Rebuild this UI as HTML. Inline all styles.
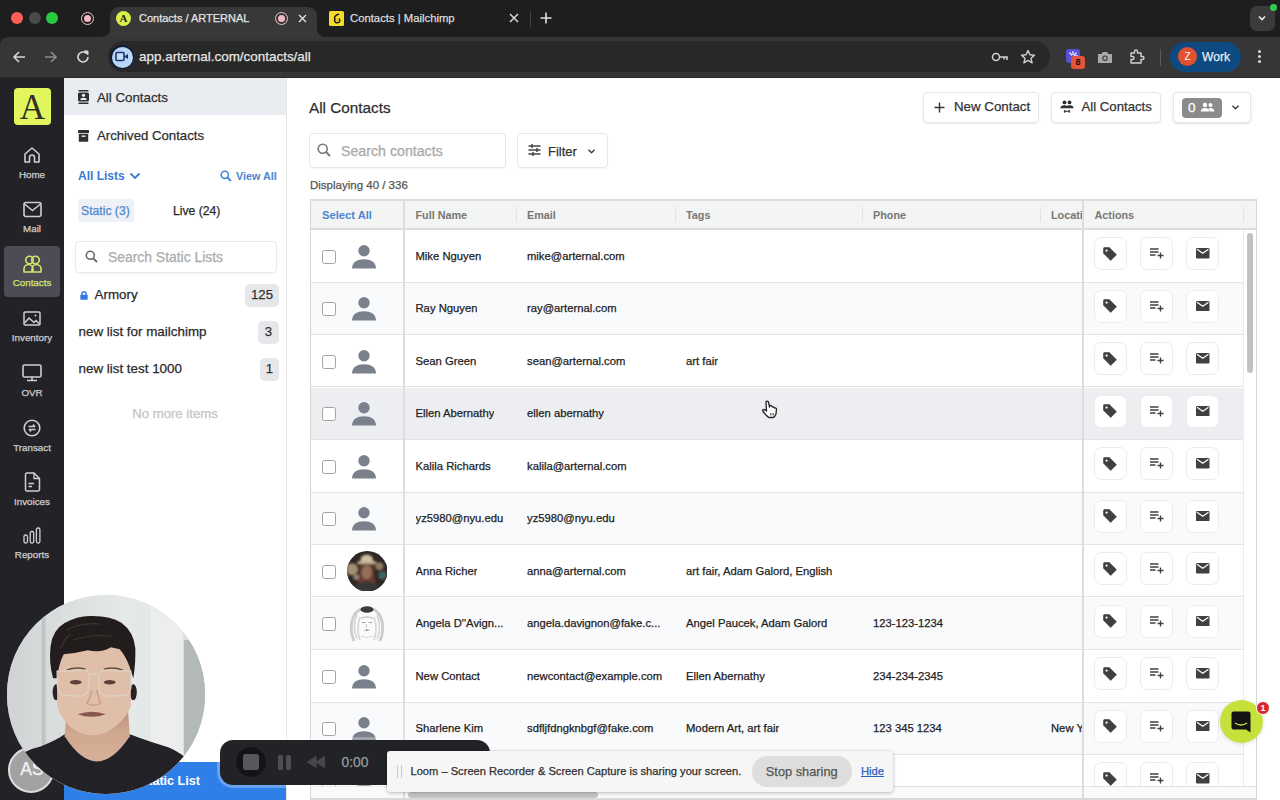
<!DOCTYPE html>
<html><head><meta charset="utf-8">
<style>
*{box-sizing:border-box;margin:0;padding:0}
html,body{width:1280px;height:800px;overflow:hidden;background:#fff}
body{position:relative;font-family:"Liberation Sans",sans-serif;color:#2b2b2b}
.a{position:absolute}
.nw{white-space:nowrap}
svg{display:block}
.nw{-webkit-text-stroke:0.25px currentColor}
.b{-webkit-text-stroke:0}
</style></head>
<body>
<!-- ===== CHROME TAB BAR ===== -->
<div class="a" style="left:0;top:0;width:1280px;height:45px;background:#1e1e1e"></div>
<div class="a" style="left:11px;top:12px;width:12px;height:12px;border-radius:50%;background:#fe5f57"></div>
<div class="a" style="left:29px;top:12px;width:12px;height:12px;border-radius:50%;background:#4a4a4a"></div>
<div class="a" style="left:46px;top:12px;width:12px;height:12px;border-radius:50%;background:#28c840"></div>
<div class="a" style="left:81px;top:12px;width:13px;height:13px;border-radius:50%;border:1.5px solid #f0c6ca;background:#1e1e1e"><div class="a" style="left:1.5px;top:1.5px;width:7px;height:7px;border-radius:50%;background:#f0b9c1"></div></div>
<!-- active tab -->
<div class="a" style="left:110px;top:7px;width:207px;height:31px;background:#383838;border-radius:9px 9px 0 0"></div>
<div class="a" style="left:102px;top:29px;width:8px;height:8px;background:radial-gradient(circle at 0 0,#1e1e1e 7.5px,#383838 8.5px)"></div>
<div class="a" style="left:317px;top:29px;width:8px;height:8px;background:radial-gradient(circle at 100% 0,#1e1e1e 7.5px,#383838 8.5px)"></div>
<div class="a" style="left:116px;top:11px;width:15px;height:15px;border-radius:50%;background:#d9f04a;color:#222;font:bold 11px 'Liberation Serif',serif;text-align:center;line-height:15px">A</div>
<div class="a nw" style="left:139px;top:11px;font-size:11px;color:#e3e3e3;line-height:15px">Contacts / ARTERNAL</div>
<div class="a" style="left:275px;top:12px;width:13px;height:13px;border-radius:50%;border:1.5px solid #f0c6ca;background:#363636"><div class="a" style="left:1.5px;top:1.5px;width:7px;height:7px;border-radius:50%;background:#f0b9c1"></div></div>
<svg class="a" style="left:297.5px;top:14px" width="9" height="9" viewBox="0 0 9 9"><path d="M1 1L8 8M8 1L1 8" stroke="#e0e0e0" stroke-width="1.4"/></svg>
<!-- second tab -->
<div class="a" style="left:329px;top:11.25px;width:14.5px;height:14.5px;border-radius:1.5px;background:#f3dd2c"></div><svg class="a" style="left:329px;top:11.25px" width="14.5" height="14.5" viewBox="0 0 14.5 14.5"><path d="M9.5 3.3Q7.5 3.5 6.2 5.2Q5 7 6 8.2Q4.8 9.8 6.5 11.3Q8.5 12.5 10.3 11Q11.3 9.5 10.3 8" stroke="#1a140c" stroke-width="1.4" fill="none" stroke-linecap="round"/><circle cx="8.2" cy="9" r="1.4" fill="#d8c030"/></svg>
<div class="a nw" style="left:350px;top:11px;font-size:11.3px;color:#dcdcdc;line-height:15px">Contacts | Mailchimp</div>
<svg class="a" style="left:509px;top:13px" width="10" height="10" viewBox="0 0 10 10"><path d="M1 1L9 9M9 1L1 9" stroke="#d8d8d8" stroke-width="1.5"/></svg>
<div class="a" style="left:530px;top:11px;width:1px;height:16px;background:#444"></div>
<svg class="a" style="left:540px;top:12px" width="12" height="12" viewBox="0 0 12 12"><path d="M6 0.5V11.5M0.5 6H11.5" stroke="#e0e0e0" stroke-width="1.6"/></svg>
<div class="a" style="left:1250px;top:6px;width:24.5px;height:25px;border-radius:7px;background:#3b3b3b"></div>
<svg class="a" style="left:1257px;top:14px" width="10" height="8" viewBox="0 0 10 8"><path d="M2 2.5L5 5.5L8 2.5" stroke="#e8e8e8" stroke-width="1.6" fill="none"/></svg>
<div class="a" style="left:1270px;top:4px;width:6.5px;height:6.5px;border-radius:50%;background:#35c94e"></div>

<!-- ===== TOOLBAR ===== -->
<div class="a" style="left:0;top:36.5px;width:1280px;height:41.5px;background:#363636;border-radius:8px 0 0 0;border-bottom:1px solid #2a2a2a"></div>
<svg class="a" style="left:11px;top:49px" width="16" height="16" viewBox="0 0 16 16"><path d="M14 8H3M8 3L3 8L8 13" stroke="#d6d6d6" stroke-width="1.6" fill="none"/></svg>
<svg class="a" style="left:43px;top:49px" width="16" height="16" viewBox="0 0 16 16"><path d="M2 8H13M8 3L13 8L8 13" stroke="#8a8a8a" stroke-width="1.6" fill="none"/></svg>
<svg class="a" style="left:75px;top:49px" width="16" height="16" viewBox="0 0 16 16"><path d="M13 8A5 5 0 1 1 11.5 4.4" stroke="#d6d6d6" stroke-width="1.6" fill="none"/><path d="M9 2H13V6Z" fill="#d6d6d6" stroke="#d6d6d6" stroke-width="1"/></svg>
<div class="a" style="left:108px;top:41px;width:942px;height:31px;border-radius:16px;background:#282828"></div>
<div class="a" style="left:110px;top:45px;width:24px;height:24px;border-radius:50%;background:#0f1c33"></div>
<div class="a" style="left:111.5px;top:46.5px;width:21px;height:21px;border-radius:50%;background:#b9d5f7"></div>
<svg class="a" style="left:115px;top:51px" width="14" height="12" viewBox="0 0 14 12"><rect x="1" y="1.5" width="8" height="8" rx="1" fill="#c7dcf7" stroke="#163a6e" stroke-width="1.6"/><path d="M9 5.5L13 3V8Z" fill="#163a6e"/></svg>
<div class="a nw" style="left:139px;top:48px;font-size:13.45px;color:#e6e6e6;line-height:17px">app.arternal.com/contacts/all</div>
<!-- key -->
<svg class="a" style="left:991px;top:50px" width="18" height="14" viewBox="0 0 18 14"><circle cx="5" cy="7" r="3.5" stroke="#cfcfcf" stroke-width="1.6" fill="none"/><path d="M8.5 7H16V10M13 7V9.5" stroke="#cfcfcf" stroke-width="1.6" fill="none"/></svg>
<svg class="a" style="left:1020px;top:49px" width="16" height="16" viewBox="0 0 16 16"><path d="M8 1.5L9.9 5.8L14.5 6.2L11 9.3L12.1 13.8L8 11.4L3.9 13.8L5 9.3L1.5 6.2L6.1 5.8Z" stroke="#d0d0d0" stroke-width="1.4" fill="none" stroke-linejoin="round"/></svg>
<!-- extension icons -->
<div class="a" style="left:1066px;top:49px;width:14px;height:14px;border-radius:3px;background:#5b4fd6"></div>
<svg class="a" style="left:1067px;top:50px" width="12" height="12" viewBox="0 0 12 12"><path d="M6 1V5M9.5 2.5L7 5.5M11 6H7M2.5 2.5L5 5.5" stroke="#e8e4ff" stroke-width="1.3"/></svg>
<div class="a" style="left:1071px;top:56px;width:14px;height:13px;border-radius:3px;background:#e5533a;color:#111;font:bold 9px 'Liberation Sans';text-align:center;line-height:13px">8</div>
<svg class="a" style="left:1097px;top:50px" width="16" height="14" viewBox="0 0 16 14"><path d="M1 4H4.5L6 2H10L11.5 4H15V13H1Z" fill="#a9a9a9"/><circle cx="8" cy="8.2" r="2.7" fill="#3a3a3a"/><circle cx="8" cy="8.2" r="1.6" fill="#a9a9a9"/></svg>
<svg class="a" style="left:1129px;top:49px" width="16" height="16" viewBox="0 0 16 16"><path d="M2 4H5.5V2.5A1.5 1.5 0 0 1 8.5 2.5V4H12V7.5H13.5A1.5 1.5 0 0 1 13.5 10.5H12V14H2V10.5H3.5A1.5 1.5 0 0 0 3.5 7.5H2Z" stroke="#d0d0d0" stroke-width="1.4" fill="none" stroke-linejoin="round"/></svg>
<div class="a" style="left:1160px;top:49px;width:1px;height:17px;background:#5a5a5a"></div>
<div class="a" style="left:1170px;top:42px;width:71px;height:30px;border-radius:15px;background:#0d4a82"></div>
<div class="a" style="left:1178px;top:47px;width:19px;height:19px;border-radius:50%;background:#e1502f;color:#fff;font-size:10px;text-align:center;line-height:19px">Z</div>
<div class="a nw" style="left:1202px;top:50px;font-size:12.1px;color:#e8eef5;line-height:15px">Work</div>
<div class="a" style="left:1258px;top:50px;width:3px;height:3px;border-radius:50%;background:#d8d8d8;box-shadow:0 5px 0 #d8d8d8,0 10px 0 #d8d8d8"></div>

<!-- ===== APP SIDEBAR ===== -->
<div class="a" style="left:0;top:78px;width:64px;height:722px;background:#232226"></div>

<div class="a" style="left:14px;top:88px;width:37px;height:37px;border-radius:4px;background:#e3f55c"></div>
<div class="a" style="left:14px;top:89px;width:37px;height:37px;text-align:center;font:35px/38px 'Liberation Serif',serif;color:#2f3026">A</div>
<svg class="a" style="left:23px;top:146px" width="18" height="18" viewBox="0 0 18 18"><path d="M2 8L9 2L16 8V16H11.5V11.5A2.5 2.5 0 0 0 6.5 11.5V16H2Z" stroke="#cfcfd1" stroke-width="1.6" fill="none" stroke-linejoin="round"/></svg>
<div class="a nw" style="left:0;top:169px;width:64px;text-align:center;font:9.8px/12px 'Liberation Sans';color:#cfcfd1">Home</div>
<svg class="a" style="left:23px;top:201px" width="19" height="17" viewBox="0 0 19 17"><rect x="1" y="1.5" width="17" height="14" rx="2" stroke="#cfcfd1" stroke-width="1.6" fill="none"/><path d="M1.5 3L9.5 9.5L17.5 3" stroke="#cfcfd1" stroke-width="1.6" fill="none"/></svg>
<div class="a nw" style="left:0;top:223px;width:64px;text-align:center;font:9.8px/12px 'Liberation Sans';color:#cfcfd1">Mail</div>
<div class="a" style="left:4px;top:246px;width:56px;height:51px;border-radius:4px;background:#4d4c55"></div>
<svg class="a" style="left:23px;top:255px" width="19" height="18" viewBox="0 0 19 18"><circle cx="6.5" cy="5" r="3.8" stroke="#d6e46e" stroke-width="1.6" fill="none"/><circle cx="12.5" cy="5" r="3.8" stroke="#d6e46e" stroke-width="1.6" fill="none"/><path d="M1 17V14A4.5 4.5 0 0 1 10 14V17ZM9 17V14A4.5 4.5 0 0 1 18 14V17Z" stroke="#d6e46e" stroke-width="1.6" fill="none" stroke-linejoin="round"/></svg>
<div class="a nw" style="left:0;top:277px;width:64px;text-align:center;font:9.8px/12px 'Liberation Sans';color:#d6e46e">Contacts</div>
<svg class="a" style="left:23px;top:311px" width="18" height="15" viewBox="0 0 18 15"><rect x="1" y="1" width="16" height="13" rx="1" stroke="#cfcfd1" stroke-width="1.5" fill="none"/><path d="M1.5 12L6 7L11 11.5L13 9.5L16.5 13" stroke="#cfcfd1" stroke-width="1.5" fill="none"/><circle cx="12.5" cy="4.5" r="1" fill="#cfcfd1"/></svg>
<div class="a nw" style="left:0;top:332px;width:64px;text-align:center;font:9.8px/12px 'Liberation Sans';color:#cfcfd1">Inventory</div>
<svg class="a" style="left:22px;top:364px" width="20" height="18" viewBox="0 0 20 18"><rect x="1" y="1" width="18" height="12" rx="1.5" stroke="#cfcfd1" stroke-width="1.6" fill="none"/><path d="M10 13V16M5 16.5H15" stroke="#cfcfd1" stroke-width="1.6"/></svg>
<div class="a nw" style="left:0;top:387px;width:64px;text-align:center;font:9.8px/12px 'Liberation Sans';color:#cfcfd1">OVR</div>
<svg class="a" style="left:23px;top:419px" width="18" height="18" viewBox="0 0 18 18"><circle cx="9" cy="9" r="7.8" stroke="#cfcfd1" stroke-width="1.6" fill="none"/><path d="M5.5 7.5H12M10 5.5L12 7.5M12.5 10.5H6M8 12.5L6 10.5" stroke="#cfcfd1" stroke-width="1.5" fill="none"/></svg>
<div class="a nw" style="left:0;top:442px;width:64px;text-align:center;font:9.8px/12px 'Liberation Sans';color:#cfcfd1">Transact</div>
<svg class="a" style="left:24px;top:472px" width="17" height="20" viewBox="0 0 17 20"><path d="M1.5 2.5A1.5 1.5 0 0 1 3 1H10L15.5 6.5V17.5A1.5 1.5 0 0 1 14 19H3A1.5 1.5 0 0 1 1.5 17.5Z" stroke="#cfcfd1" stroke-width="1.5" fill="none"/><path d="M10 1V6.5H15.5" stroke="#cfcfd1" stroke-width="1.3" fill="none"/><path d="M4.5 11.5H10M4.5 14.5H8" stroke="#cfcfd1" stroke-width="1.5"/></svg>
<div class="a nw" style="left:0;top:496px;width:64px;text-align:center;font:9.8px/12px 'Liberation Sans';color:#cfcfd1">Invoices</div>
<svg class="a" style="left:23px;top:527px" width="18" height="17" viewBox="0 0 18 17"><rect x="1" y="8" width="3.5" height="8" rx="1.5" stroke="#cfcfd1" stroke-width="1.3" fill="none"/><rect x="7.2" y="4.5" width="3.5" height="11.5" rx="1.5" stroke="#cfcfd1" stroke-width="1.3" fill="none"/><rect x="13.4" y="1" width="3.5" height="15" rx="1.5" stroke="#cfcfd1" stroke-width="1.3" fill="none"/></svg>
<div class="a nw" style="left:0;top:549px;width:64px;text-align:center;font:9.8px/12px 'Liberation Sans';color:#cfcfd1">Reports</div>


<!-- ===== PANEL ===== -->
<div class="a" style="left:64px;top:78px;width:223px;height:722px;background:#fff;border-right:1px solid #e6e6e6"></div>

<div class="a" style="left:64px;top:78px;width:222px;height:37px;background:#e9edf2"></div>
<svg class="a" style="left:78px;top:90px" width="11" height="14" viewBox="0 0 11 14"><rect x="0.5" y="0" width="10" height="1.5" rx="0.5" fill="#2f2f2f"/><rect x="0" y="2.5" width="11" height="9" rx="1.5" fill="#2f2f2f"/><rect x="0.5" y="12.5" width="10" height="1.5" rx="0.5" fill="#2f2f2f"/><circle cx="5.5" cy="5.3" r="1.6" fill="#e9edf2"/><path d="M2.3 10A3.2 2.2 0 0 1 8.7 10Z" fill="#e9edf2"/></svg>
<div class="a nw" style="left:97px;top:90px;font-size:13.3px;line-height:16px;color:#2e2e2e">All Contacts</div>
<svg class="a" style="left:78px;top:130px" width="11" height="12" viewBox="0 0 11 12"><rect x="0" y="0" width="11" height="3" rx="0.5" fill="#2f2f2f"/><rect x="0.8" y="3.8" width="9.4" height="8" rx="0.5" fill="#2f2f2f"/><rect x="3.5" y="5.5" width="4" height="1.3" fill="#fff"/></svg>
<div class="a nw" style="left:97px;top:128px;font-size:13.2px;line-height:16px;color:#2e2e2e">Archived Contacts</div>
<div class="a nw b" style="left:78px;top:169px;font:bold 12px/15px 'Liberation Sans';color:#3a7bd5">All Lists</div>
<svg class="a" style="left:129px;top:171px" width="12" height="10" viewBox="0 0 12 10"><path d="M1.5 2.5L6 7L10.5 2.5" stroke="#3a7bd5" stroke-width="1.8" fill="none"/></svg>
<svg class="a" style="left:220px;top:170px" width="12" height="12" viewBox="0 0 12 12"><circle cx="4.8" cy="4.8" r="3.6" stroke="#4a86d2" stroke-width="1.6" fill="none"/><path d="M7.5 7.5L11 11" stroke="#4a86d2" stroke-width="1.8"/></svg>
<div class="a nw b" style="left:236px;top:170px;font:bold 10.8px/13px 'Liberation Sans';color:#4a86d2">View All</div>
<div class="a" style="left:78px;top:199px;width:56px;height:23px;border-radius:3px;background:#eef1f5"></div>
<div class="a nw" style="left:81px;top:204px;font-size:12.2px;line-height:15px;color:#4f88cf">Static (3)</div>
<div class="a nw" style="left:173px;top:204px;font-size:12.2px;line-height:15px;color:#2a2a2a">Live (24)</div>
<div class="a" style="left:75px;top:241px;width:202px;height:31.5px;border-radius:4px;border:1px solid #e6e8ec;box-shadow:0 1px 2px rgba(0,0,0,0.05)"></div>
<svg class="a" style="left:85px;top:250px" width="13" height="13" viewBox="0 0 13 13"><circle cx="5.3" cy="5.3" r="4" stroke="#666" stroke-width="1.6" fill="none"/><path d="M8.3 8.3L12 12" stroke="#666" stroke-width="1.8"/></svg>
<div class="a nw" style="left:108px;top:249px;font-size:13.9px;line-height:17px;color:#ababab">Search Static Lists</div>
<svg class="a" style="left:80px;top:291px" width="8" height="9" viewBox="0 0 8 9"><path d="M1.9 4V2.8A2.1 2.1 0 0 1 6.1 2.8V4" stroke="#3478e0" stroke-width="1.4" fill="none"/><rect x="0.3" y="3.8" width="7.4" height="5" rx="0.8" fill="#3478e0"/></svg>
<div class="a nw" style="left:94.5px;top:287px;font-size:13.4px;line-height:16px;color:#2a2a2a">Armory</div>
<div class="a" style="left:245px;top:284px;width:34px;height:22.5px;border-radius:5px;background:#e6e7ea"></div>
<div class="a nw" style="left:245px;top:287px;width:34px;text-align:center;font-size:13.2px;line-height:16px;color:#333">125</div>
<div class="a nw" style="left:78.5px;top:324px;font-size:13.4px;line-height:16px;color:#2a2a2a">new list for mailchimp</div>
<div class="a" style="left:258px;top:321px;width:21px;height:22.5px;border-radius:5px;background:#e6e7ea"></div>
<div class="a nw" style="left:258px;top:324px;width:21px;text-align:center;font-size:13.2px;line-height:16px;color:#333">3</div>
<div class="a nw" style="left:78.5px;top:361px;font-size:13.4px;line-height:16px;color:#2a2a2a">new list test 1000</div>
<div class="a" style="left:260px;top:358px;width:19px;height:22.5px;border-radius:5px;background:#e6e7ea"></div>
<div class="a nw" style="left:260px;top:361px;width:19px;text-align:center;font-size:13.2px;line-height:16px;color:#333">1</div>
<div class="a nw" style="left:64px;top:406px;width:222px;text-align:center;font-size:13.2px;line-height:16px;color:#c4c4c4">No more items</div>
<div class="a" style="left:64px;top:761.5px;width:222px;height:39px;background:#2f7fe8"></div>
<div class="a nw b" style="left:0px;top:773px;width:200px;text-align:right;font:bold 12.6px/16px 'Liberation Sans';color:#fff">+&nbsp;&nbsp;Create Static List</div>


<!-- ===== MAIN ===== -->
<!-- MAIN START -->
<div class="a nw" style="left:309px;top:99px;font-size:15.3px;line-height:17px;color:#2e2e2e">All Contacts</div>
<div class="a" style="left:922.5px;top:92px;width:116.5px;height:31px;border-radius:4px;border:1px solid #e6e6e6;box-shadow:0 1px 2px rgba(0,0,0,0.08);background:#fff"></div>
<svg class="a" style="left:934px;top:102px" width="11" height="11" viewBox="0 0 11 11"><path d="M5.5 0.5V10.5M0.5 5.5H10.5" stroke="#333" stroke-width="1.4"/></svg>
<div class="a nw" style="left:954px;top:99px;font-size:13.3px;line-height:16px;color:#333">New Contact</div>
<div class="a" style="left:1050.5px;top:92px;width:110px;height:31px;border-radius:4px;border:1px solid #e6e6e6;box-shadow:0 1px 2px rgba(0,0,0,0.08);background:#fff"></div>
<svg class="a" style="left:1060px;top:100px" width="14" height="14" viewBox="0 0 14 14"><circle cx="4.5" cy="2.4" r="1.9" fill="#2e2e2e"/><circle cx="9.5" cy="2.4" r="1.9" fill="#2e2e2e"/><path d="M0.3 8.3Q0.8 5 4.5 5.2Q7 5.4 7 6.2Q7 5.4 9.5 5.2Q13.2 5 13.7 8.3Z" fill="#2e2e2e"/><path d="M4 11.3H10M4 11.3L5.3 10.1M4 11.3L5.3 12.5M10 11.3L8.7 10.1M10 11.3L8.7 12.5" stroke="#2e2e2e" stroke-width="1.1" fill="none"/></svg>
<div class="a nw" style="left:1081.5px;top:99px;font-size:13.2px;line-height:16px;color:#333">All Contacts</div>
<div class="a" style="left:1173px;top:92px;width:78px;height:31px;border-radius:4px;border:1px solid #e6e6e6;box-shadow:0 1px 3px rgba(0,0,0,0.12);background:#fff"></div>
<div class="a" style="left:1182px;top:98px;width:40px;height:19.5px;border-radius:4px;background:#8b8b8b"></div>
<div class="a nw" style="left:1188px;top:99px;font-size:13.5px;line-height:17px;color:#fff">0</div>
<svg class="a" style="left:1200px;top:102px" width="15" height="11" viewBox="0 0 15 11"><circle cx="5" cy="3" r="2.2" fill="#fff"/><circle cx="10.5" cy="3" r="2" fill="#fff"/><path d="M0.8 9.5A4.2 3.5 0 0 1 9.2 9.5Z" fill="#fff"/><path d="M8.5 6.5A3.8 3 0 0 1 14.3 9.5H10Z" fill="#fff"/></svg>
<svg class="a" style="left:1231px;top:104px" width="9" height="7" viewBox="0 0 9 7"><path d="M1.5 1.8L4.5 4.8L7.5 1.8" stroke="#444" stroke-width="1.5" fill="none"/></svg>

<div class="a" style="left:309px;top:133px;width:197px;height:35px;border-radius:4px;border:1px solid #e6e6e6;box-shadow:0 1px 1px rgba(0,0,0,0.03)"></div>
<svg class="a" style="left:317px;top:143px" width="14" height="14" viewBox="0 0 14 14"><circle cx="5.7" cy="5.7" r="4.5" stroke="#777" stroke-width="1.6" fill="none"/><path d="M9 9L13 13" stroke="#777" stroke-width="1.8"/></svg>
<div class="a nw" style="left:341px;top:143px;font-size:14.2px;line-height:17px;color:#a9a9a9">Search contacts</div>
<div class="a" style="left:517px;top:133px;width:91px;height:35px;border-radius:4px;border:1px solid #e6e6e6;box-shadow:0 1px 1px rgba(0,0,0,0.04)"></div>
<svg class="a" style="left:528px;top:144px" width="13" height="12" viewBox="0 0 13 12"><path d="M0.5 2H12.5M0.5 6H12.5M0.5 10H12.5" stroke="#444" stroke-width="1.3"/><path d="M4 0V4M9 4V8M5 8V12" stroke="#444" stroke-width="1.5"/></svg>
<div class="a nw" style="left:548px;top:144px;font-size:13px;line-height:16px;color:#333">Filter</div>
<svg class="a" style="left:587px;top:148px" width="9" height="7" viewBox="0 0 9 7"><path d="M1.5 1.8L4.5 4.8L7.5 1.8" stroke="#444" stroke-width="1.5" fill="none"/></svg>
<div class="a nw" style="left:310px;top:178px;font-size:11.5px;line-height:14px;color:#555">Displaying 40 / 336</div>

<div class="a" style="left:310px;top:199px;width:947px;height:601px;overflow:hidden;background:#fff">
<div class="a" style="left:0;top:0;width:947px;height:31px;background:#f3f4f4"></div>
<div class="a" style="left:0;top:0;width:947px;height:2px;background:#dddddd"></div>
<div class="a" style="left:0;top:29px;width:947px;height:2px;background:#dcdcdc"></div>
<div class="a nw b" style="left:12px;top:10px;font:bold 11.2px/13px 'Liberation Sans';color:#4d86d0">Select All</div>
<div class="a nw b" style="left:105.5px;top:10px;font:bold 10.8px/13px 'Liberation Sans';color:#777">Full Name</div>
<div class="a nw b" style="left:217px;top:10px;font:bold 10.8px/13px 'Liberation Sans';color:#777">Email</div>
<div class="a nw b" style="left:376px;top:10px;font:bold 10.8px/13px 'Liberation Sans';color:#777">Tags</div>
<div class="a nw b" style="left:563px;top:10px;font:bold 10.8px/13px 'Liberation Sans';color:#777">Phone</div>
<div class="a nw b" style="left:741px;top:10px;width:31px;overflow:hidden;font:bold 10.8px/13px 'Liberation Sans';color:#777">Location</div>
<div class="a nw b" style="left:784.5px;top:10px;font:bold 10.8px/13px 'Liberation Sans';color:#777">Actions</div>
<div class="a" style="left:206px;top:8px;width:1px;height:15px;background:#e3e3e3"></div>
<div class="a" style="left:365px;top:8px;width:1px;height:15px;background:#e3e3e3"></div>
<div class="a" style="left:552px;top:8px;width:1px;height:15px;background:#e3e3e3"></div>
<div class="a" style="left:730px;top:8px;width:1px;height:15px;background:#e3e3e3"></div>
<div class="a" style="left:933px;top:8px;width:1px;height:15px;background:#e3e3e3"></div>
<div class="a" style="left:0;top:31.0px;width:947px;height:52.5px;background:#fff"></div>
<div class="a" style="left:0;top:83px;width:947px;height:1px;background:#e3e3e3"></div>
<div class="a" style="left:12px;top:50.5px;width:14px;height:14px;border-radius:2.5px;border:1.3px solid #a3a3a3;background:#fff"></div>
<svg class="a" style="left:42px;top:45.650000000000006px" width="24" height="24" viewBox="0 0 24 24"><circle cx="12" cy="5.7" r="5.7" fill="#7b818c"/><path d="M0 23.6C0 17.2 5 14.2 12 14.2C19 14.2 24 17.2 24 23.6Z" fill="#7b818c"/></svg>
<div class="a nw" style="left:105.5px;top:49.75px;font-size:11.25px;line-height:14px;color:#222;max-width:666.5px;overflow:hidden">Mike Nguyen</div>
<div class="a nw" style="left:217px;top:49.75px;font-size:11.25px;line-height:14px;color:#222;max-width:555px;overflow:hidden">mike@arternal.com</div>
<div class="a" style="left:0;top:83.5px;width:947px;height:52.5px;background:#f9fafc"></div>
<div class="a" style="left:0;top:135px;width:947px;height:1px;background:#e3e3e3"></div>
<div class="a" style="left:12px;top:103.0px;width:14px;height:14px;border-radius:2.5px;border:1.3px solid #a3a3a3;background:#fff"></div>
<svg class="a" style="left:42px;top:98.14999999999998px" width="24" height="24" viewBox="0 0 24 24"><circle cx="12" cy="5.7" r="5.7" fill="#7b818c"/><path d="M0 23.6C0 17.2 5 14.2 12 14.2C19 14.2 24 17.2 24 23.6Z" fill="#7b818c"/></svg>
<div class="a nw" style="left:105.5px;top:102.25px;font-size:11.25px;line-height:14px;color:#222;max-width:666.5px;overflow:hidden">Ray Nguyen</div>
<div class="a nw" style="left:217px;top:102.25px;font-size:11.25px;line-height:14px;color:#222;max-width:555px;overflow:hidden">ray@arternal.com</div>
<div class="a" style="left:0;top:136.0px;width:947px;height:52.5px;background:#fff"></div>
<div class="a" style="left:0;top:187px;width:947px;height:1px;background:#e3e3e3"></div>
<div class="a" style="left:12px;top:155.5px;width:14px;height:14px;border-radius:2.5px;border:1.3px solid #a3a3a3;background:#fff"></div>
<svg class="a" style="left:42px;top:150.64999999999998px" width="24" height="24" viewBox="0 0 24 24"><circle cx="12" cy="5.7" r="5.7" fill="#7b818c"/><path d="M0 23.6C0 17.2 5 14.2 12 14.2C19 14.2 24 17.2 24 23.6Z" fill="#7b818c"/></svg>
<div class="a nw" style="left:105.5px;top:154.75px;font-size:11.25px;line-height:14px;color:#222;max-width:666.5px;overflow:hidden">Sean Green</div>
<div class="a nw" style="left:217px;top:154.75px;font-size:11.25px;line-height:14px;color:#222;max-width:555px;overflow:hidden">sean@arternal.com</div>
<div class="a nw" style="left:376px;top:154.75px;font-size:11.25px;line-height:14px;color:#222;max-width:396px;overflow:hidden">art fair</div>
<div class="a" style="left:0;top:188.5px;width:947px;height:52.5px;background:#eceef1"></div>
<div class="a" style="left:0;top:240px;width:947px;height:1px;background:#e3e3e3"></div>
<div class="a" style="left:12px;top:208.0px;width:14px;height:14px;border-radius:2.5px;border:1.3px solid #a3a3a3;background:#fff"></div>
<svg class="a" style="left:42px;top:203.14999999999998px" width="24" height="24" viewBox="0 0 24 24"><circle cx="12" cy="5.7" r="5.7" fill="#7b818c"/><path d="M0 23.6C0 17.2 5 14.2 12 14.2C19 14.2 24 17.2 24 23.6Z" fill="#7b818c"/></svg>
<div class="a nw" style="left:105.5px;top:207.25px;font-size:11.25px;line-height:14px;color:#222;max-width:666.5px;overflow:hidden">Ellen Abernathy</div>
<div class="a nw" style="left:217px;top:207.25px;font-size:11.25px;line-height:14px;color:#222;max-width:555px;overflow:hidden">ellen abernathy</div>
<div class="a" style="left:0;top:241.0px;width:947px;height:52.5px;background:#fff"></div>
<div class="a" style="left:0;top:293px;width:947px;height:1px;background:#e3e3e3"></div>
<div class="a" style="left:12px;top:260.5px;width:14px;height:14px;border-radius:2.5px;border:1.3px solid #a3a3a3;background:#fff"></div>
<svg class="a" style="left:42px;top:255.64999999999998px" width="24" height="24" viewBox="0 0 24 24"><circle cx="12" cy="5.7" r="5.7" fill="#7b818c"/><path d="M0 23.6C0 17.2 5 14.2 12 14.2C19 14.2 24 17.2 24 23.6Z" fill="#7b818c"/></svg>
<div class="a nw" style="left:105.5px;top:259.75px;font-size:11.25px;line-height:14px;color:#222;max-width:666.5px;overflow:hidden">Kalila Richards</div>
<div class="a nw" style="left:217px;top:259.75px;font-size:11.25px;line-height:14px;color:#222;max-width:555px;overflow:hidden">kalila@arternal.com</div>
<div class="a" style="left:0;top:293.5px;width:947px;height:52.5px;background:#f9fafc"></div>
<div class="a" style="left:0;top:345px;width:947px;height:1px;background:#e3e3e3"></div>
<div class="a" style="left:12px;top:313.0px;width:14px;height:14px;border-radius:2.5px;border:1.3px solid #a3a3a3;background:#fff"></div>
<svg class="a" style="left:42px;top:308.15px" width="24" height="24" viewBox="0 0 24 24"><circle cx="12" cy="5.7" r="5.7" fill="#7b818c"/><path d="M0 23.6C0 17.2 5 14.2 12 14.2C19 14.2 24 17.2 24 23.6Z" fill="#7b818c"/></svg>
<div class="a nw" style="left:105.5px;top:312.25px;font-size:11.25px;line-height:14px;color:#222;max-width:666.5px;overflow:hidden">yz5980@nyu.edu</div>
<div class="a nw" style="left:217px;top:312.25px;font-size:11.25px;line-height:14px;color:#222;max-width:555px;overflow:hidden">yz5980@nyu.edu</div>
<div class="a" style="left:0;top:346.0px;width:947px;height:52.5px;background:#fff"></div>
<div class="a" style="left:0;top:397px;width:947px;height:1px;background:#e3e3e3"></div>
<div class="a" style="left:12px;top:365.5px;width:14px;height:14px;border-radius:2.5px;border:1.3px solid #a3a3a3;background:#fff"></div>
<div class="a nw" style="left:105.5px;top:364.75px;font-size:11.25px;line-height:14px;color:#222;max-width:666.5px;overflow:hidden">Anna Richer</div>
<div class="a nw" style="left:217px;top:364.75px;font-size:11.25px;line-height:14px;color:#222;max-width:555px;overflow:hidden">anna@arternal.com</div>
<div class="a nw" style="left:376px;top:364.75px;font-size:11.25px;line-height:14px;color:#222;max-width:396px;overflow:hidden">art fair, Adam Galord, English</div>
<div class="a" style="left:0;top:398.5px;width:947px;height:52.5px;background:#f9fafc"></div>
<div class="a" style="left:0;top:450px;width:947px;height:1px;background:#e3e3e3"></div>
<div class="a" style="left:12px;top:418.0px;width:14px;height:14px;border-radius:2.5px;border:1.3px solid #a3a3a3;background:#fff"></div>
<div class="a nw" style="left:105.5px;top:417.25px;font-size:11.25px;line-height:14px;color:#222;max-width:666.5px;overflow:hidden">Angela D''Avign...</div>
<div class="a nw" style="left:217px;top:417.25px;font-size:11.25px;line-height:14px;color:#222;max-width:555px;overflow:hidden">angela.davignon@fake.c...</div>
<div class="a nw" style="left:376px;top:417.25px;font-size:11.25px;line-height:14px;color:#222;max-width:396px;overflow:hidden">Angel Paucek, Adam Galord</div>
<div class="a nw" style="left:563px;top:417.25px;font-size:11.25px;line-height:14px;color:#222;max-width:209px;overflow:hidden">123-123-1234</div>
<div class="a" style="left:0;top:451.0px;width:947px;height:52.5px;background:#fff"></div>
<div class="a" style="left:0;top:503px;width:947px;height:1px;background:#e3e3e3"></div>
<div class="a" style="left:12px;top:470.5px;width:14px;height:14px;border-radius:2.5px;border:1.3px solid #a3a3a3;background:#fff"></div>
<svg class="a" style="left:42px;top:465.65px" width="24" height="24" viewBox="0 0 24 24"><circle cx="12" cy="5.7" r="5.7" fill="#7b818c"/><path d="M0 23.6C0 17.2 5 14.2 12 14.2C19 14.2 24 17.2 24 23.6Z" fill="#7b818c"/></svg>
<div class="a nw" style="left:105.5px;top:469.75px;font-size:11.25px;line-height:14px;color:#222;max-width:666.5px;overflow:hidden">New Contact</div>
<div class="a nw" style="left:217px;top:469.75px;font-size:11.25px;line-height:14px;color:#222;max-width:555px;overflow:hidden">newcontact@example.com</div>
<div class="a nw" style="left:376px;top:469.75px;font-size:11.25px;line-height:14px;color:#222;max-width:396px;overflow:hidden">Ellen Abernathy</div>
<div class="a nw" style="left:563px;top:469.75px;font-size:11.25px;line-height:14px;color:#222;max-width:209px;overflow:hidden">234-234-2345</div>
<div class="a" style="left:0;top:503.5px;width:947px;height:52.5px;background:#f9fafc"></div>
<div class="a" style="left:0;top:555px;width:947px;height:1px;background:#e3e3e3"></div>
<div class="a" style="left:12px;top:523.0px;width:14px;height:14px;border-radius:2.5px;border:1.3px solid #a3a3a3;background:#fff"></div>
<svg class="a" style="left:42px;top:518.15px" width="24" height="24" viewBox="0 0 24 24"><circle cx="12" cy="5.7" r="5.7" fill="#7b818c"/><path d="M0 23.6C0 17.2 5 14.2 12 14.2C19 14.2 24 17.2 24 23.6Z" fill="#7b818c"/></svg>
<div class="a nw" style="left:105.5px;top:522.25px;font-size:11.25px;line-height:14px;color:#222;max-width:666.5px;overflow:hidden">Sharlene Kim</div>
<div class="a nw" style="left:217px;top:522.25px;font-size:11.25px;line-height:14px;color:#222;max-width:555px;overflow:hidden">sdfljfdngknbgf@fake.com</div>
<div class="a nw" style="left:376px;top:522.25px;font-size:11.25px;line-height:14px;color:#222;max-width:396px;overflow:hidden">Modern Art, art fair</div>
<div class="a nw" style="left:563px;top:522.25px;font-size:11.25px;line-height:14px;color:#222;max-width:209px;overflow:hidden">123 345 1234</div>
<div class="a nw" style="left:741px;top:522.25px;font-size:11.25px;line-height:14px;color:#222;max-width:31px;overflow:hidden">New Y</div>
<div class="a" style="left:0;top:556.0px;width:947px;height:52.5px;background:#fff"></div>
<div class="a" style="left:0;top:607px;width:947px;height:1px;background:#e3e3e3"></div>
<div class="a" style="left:12px;top:575.5px;width:14px;height:14px;border-radius:2.5px;border:1.3px solid #a3a3a3;background:#fff"></div>
<svg class="a" style="left:42px;top:570.65px" width="24" height="24" viewBox="0 0 24 24"><circle cx="12" cy="5.7" r="5.7" fill="#7b818c"/><path d="M0 23.6C0 17.2 5 14.2 12 14.2C19 14.2 24 17.2 24 23.6Z" fill="#7b818c"/></svg>
<svg class="a" style="left:36.5px;top:351.54999999999995px" width="40.5" height="40.5" viewBox="0 0 40 40"><defs><clipPath id="ca"><circle cx="20" cy="20" r="20"/></clipPath><filter id="bl"><feGaussianBlur stdDeviation="0.9"/></filter></defs>
<g clip-path="url(#ca)"><rect width="40" height="40" fill="#2f2723"/><g filter="url(#bl)">
<ellipse cx="5" cy="18" rx="6" ry="6" fill="#a48e72"/>
<ellipse cx="10" cy="26" rx="4" ry="3" fill="#8a8070"/>
<ellipse cx="32" cy="15" rx="4" ry="4" fill="#8c7a62"/>
<ellipse cx="35" cy="24" rx="4" ry="4" fill="#3f6664"/>
<path d="M13 14 Q12 28 10 40 L30 40 Q27 28 26 14Z" fill="#6a3a2a"/>
<ellipse cx="19.5" cy="21" rx="5" ry="7" fill="#94705c"/>
<path d="M4 40 Q8 31 19.5 30 Q31 31 36 40Z" fill="#35373b"/>
<path d="M14 6 Q19.5 1 25 6 L26 11 L13 11Z" fill="#cdbfa3"/>
<rect x="10" y="10" width="19" height="3" rx="1.5" fill="#c2b296"/>
</g></g></svg>
<svg class="a" style="left:36.5px;top:404.04999999999995px" width="40" height="40" viewBox="0 0 40 40"><defs><filter id="bl2"><feGaussianBlur stdDeviation="0.7"/></filter></defs>
<g filter="url(#bl2)">
<path d="M7 38 Q2 26 6 15 Q10 5 20 5 Q30 5 34 15 Q38 26 33 38" stroke="#cdcdcd" stroke-width="3" fill="none"/>
<path d="M10 36 Q5 24 10 12M30 36 Q35 24 30 12M13 37 Q9 26 13 14M27 37 Q31 26 27 14" stroke="#d6d6d6" stroke-width="1.6" fill="none"/>
<ellipse cx="20" cy="6.5" rx="6.5" ry="3.2" fill="#3a3a3a"/>
<path d="M14 15.5 Q20 12.5 26 15.5" stroke="#c8c8c8" stroke-width="1.4" fill="none"/>
<path d="M15 19.5H18.5M21.5 19.5H25" stroke="#a0a0a0" stroke-width="1.1"/>
<path d="M17 27 Q20 25.8 23 27 Q20 28.6 17 27Z" fill="#707070"/>
<path d="M19.5 21V24" stroke="#b8b8b8" stroke-width="0.8"/>
<path d="M14 33 Q20 36 26 33" stroke="#d8d8d8" stroke-width="1" fill="none"/>
</g></svg>
<div class="a" style="left:93px;top:0;width:2px;height:601px;background:#dedede"></div>
<div class="a" style="left:0;top:0;width:1px;height:601px;background:#d4d4d4"></div>
<div class="a" style="left:946px;top:0;width:1px;height:601px;background:#d8d8d8"></div>
<div class="a" style="left:772px;top:0;width:2px;height:601px;background:#dddddd"></div>
<div class="a" style="left:783.5px;top:38.0px;width:33px;height:33px;border-radius:7px;border:1px solid #ececec;background:#fff"></div>
<div class="a" style="left:829.8px;top:38.0px;width:33px;height:33px;border-radius:7px;border:1px solid #ececec;background:#fff"></div>
<div class="a" style="left:876.0999999999999px;top:38.0px;width:33px;height:33px;border-radius:7px;border:1px solid #ececec;background:#fff"></div>
<svg class="a" style="left:793px;top:47.69999999999999px" width="14" height="14" viewBox="0 0 14 14"><path d="M0.5 1.5A1 1 0 0 1 1.5 0.5H6.3L13.5 7.7L7.7 13.5L0.5 6.3Z" fill="#404040" stroke="#404040" stroke-width="0.6" stroke-linejoin="round"/><circle cx="3.6" cy="3.6" r="1.15" fill="#fff"/></svg>
<svg class="a" style="left:839.5px;top:49.30000000000001px" width="14" height="11" viewBox="0 0 14 11"><path d="M0 1H8.5M0 4H8.5M0 7H5.5M10.5 4.5V10.5M7.5 7.5H13.5" stroke="#404040" stroke-width="1.35"/></svg>
<svg class="a" style="left:886px;top:49.25px" width="13.5" height="10.5" viewBox="0 0 13.5 10.5"><rect x="0" y="0" width="13.5" height="10.5" rx="1.2" fill="#404040"/><path d="M1 1.3L6.75 5.2L12.5 1.3" stroke="#fff" stroke-width="1.2" fill="none"/></svg>
<div class="a" style="left:783.5px;top:90.5px;width:33px;height:33px;border-radius:7px;border:1px solid #ececec;background:#fff"></div>
<div class="a" style="left:829.8px;top:90.5px;width:33px;height:33px;border-radius:7px;border:1px solid #ececec;background:#fff"></div>
<div class="a" style="left:876.0999999999999px;top:90.5px;width:33px;height:33px;border-radius:7px;border:1px solid #ececec;background:#fff"></div>
<svg class="a" style="left:793px;top:100.19999999999999px" width="14" height="14" viewBox="0 0 14 14"><path d="M0.5 1.5A1 1 0 0 1 1.5 0.5H6.3L13.5 7.7L7.7 13.5L0.5 6.3Z" fill="#404040" stroke="#404040" stroke-width="0.6" stroke-linejoin="round"/><circle cx="3.6" cy="3.6" r="1.15" fill="#fff"/></svg>
<svg class="a" style="left:839.5px;top:101.80000000000001px" width="14" height="11" viewBox="0 0 14 11"><path d="M0 1H8.5M0 4H8.5M0 7H5.5M10.5 4.5V10.5M7.5 7.5H13.5" stroke="#404040" stroke-width="1.35"/></svg>
<svg class="a" style="left:886px;top:101.75px" width="13.5" height="10.5" viewBox="0 0 13.5 10.5"><rect x="0" y="0" width="13.5" height="10.5" rx="1.2" fill="#404040"/><path d="M1 1.3L6.75 5.2L12.5 1.3" stroke="#fff" stroke-width="1.2" fill="none"/></svg>
<div class="a" style="left:783.5px;top:143.0px;width:33px;height:33px;border-radius:7px;border:1px solid #ececec;background:#fff"></div>
<div class="a" style="left:829.8px;top:143.0px;width:33px;height:33px;border-radius:7px;border:1px solid #ececec;background:#fff"></div>
<div class="a" style="left:876.0999999999999px;top:143.0px;width:33px;height:33px;border-radius:7px;border:1px solid #ececec;background:#fff"></div>
<svg class="a" style="left:793px;top:152.7px" width="14" height="14" viewBox="0 0 14 14"><path d="M0.5 1.5A1 1 0 0 1 1.5 0.5H6.3L13.5 7.7L7.7 13.5L0.5 6.3Z" fill="#404040" stroke="#404040" stroke-width="0.6" stroke-linejoin="round"/><circle cx="3.6" cy="3.6" r="1.15" fill="#fff"/></svg>
<svg class="a" style="left:839.5px;top:154.3px" width="14" height="11" viewBox="0 0 14 11"><path d="M0 1H8.5M0 4H8.5M0 7H5.5M10.5 4.5V10.5M7.5 7.5H13.5" stroke="#404040" stroke-width="1.35"/></svg>
<svg class="a" style="left:886px;top:154.25px" width="13.5" height="10.5" viewBox="0 0 13.5 10.5"><rect x="0" y="0" width="13.5" height="10.5" rx="1.2" fill="#404040"/><path d="M1 1.3L6.75 5.2L12.5 1.3" stroke="#fff" stroke-width="1.2" fill="none"/></svg>
<div class="a" style="left:783.5px;top:195.5px;width:33px;height:33px;border-radius:7px;border:1px solid #ececec;background:#fff"></div>
<div class="a" style="left:829.8px;top:195.5px;width:33px;height:33px;border-radius:7px;border:1px solid #ececec;background:#fff"></div>
<div class="a" style="left:876.0999999999999px;top:195.5px;width:33px;height:33px;border-radius:7px;border:1px solid #ececec;background:#fff"></div>
<svg class="a" style="left:793px;top:205.2px" width="14" height="14" viewBox="0 0 14 14"><path d="M0.5 1.5A1 1 0 0 1 1.5 0.5H6.3L13.5 7.7L7.7 13.5L0.5 6.3Z" fill="#404040" stroke="#404040" stroke-width="0.6" stroke-linejoin="round"/><circle cx="3.6" cy="3.6" r="1.15" fill="#fff"/></svg>
<svg class="a" style="left:839.5px;top:206.8px" width="14" height="11" viewBox="0 0 14 11"><path d="M0 1H8.5M0 4H8.5M0 7H5.5M10.5 4.5V10.5M7.5 7.5H13.5" stroke="#404040" stroke-width="1.35"/></svg>
<svg class="a" style="left:886px;top:206.75px" width="13.5" height="10.5" viewBox="0 0 13.5 10.5"><rect x="0" y="0" width="13.5" height="10.5" rx="1.2" fill="#404040"/><path d="M1 1.3L6.75 5.2L12.5 1.3" stroke="#fff" stroke-width="1.2" fill="none"/></svg>
<div class="a" style="left:783.5px;top:248.0px;width:33px;height:33px;border-radius:7px;border:1px solid #ececec;background:#fff"></div>
<div class="a" style="left:829.8px;top:248.0px;width:33px;height:33px;border-radius:7px;border:1px solid #ececec;background:#fff"></div>
<div class="a" style="left:876.0999999999999px;top:248.0px;width:33px;height:33px;border-radius:7px;border:1px solid #ececec;background:#fff"></div>
<svg class="a" style="left:793px;top:257.7px" width="14" height="14" viewBox="0 0 14 14"><path d="M0.5 1.5A1 1 0 0 1 1.5 0.5H6.3L13.5 7.7L7.7 13.5L0.5 6.3Z" fill="#404040" stroke="#404040" stroke-width="0.6" stroke-linejoin="round"/><circle cx="3.6" cy="3.6" r="1.15" fill="#fff"/></svg>
<svg class="a" style="left:839.5px;top:259.3px" width="14" height="11" viewBox="0 0 14 11"><path d="M0 1H8.5M0 4H8.5M0 7H5.5M10.5 4.5V10.5M7.5 7.5H13.5" stroke="#404040" stroke-width="1.35"/></svg>
<svg class="a" style="left:886px;top:259.25px" width="13.5" height="10.5" viewBox="0 0 13.5 10.5"><rect x="0" y="0" width="13.5" height="10.5" rx="1.2" fill="#404040"/><path d="M1 1.3L6.75 5.2L12.5 1.3" stroke="#fff" stroke-width="1.2" fill="none"/></svg>
<div class="a" style="left:783.5px;top:300.5px;width:33px;height:33px;border-radius:7px;border:1px solid #ececec;background:#fff"></div>
<div class="a" style="left:829.8px;top:300.5px;width:33px;height:33px;border-radius:7px;border:1px solid #ececec;background:#fff"></div>
<div class="a" style="left:876.0999999999999px;top:300.5px;width:33px;height:33px;border-radius:7px;border:1px solid #ececec;background:#fff"></div>
<svg class="a" style="left:793px;top:310.2px" width="14" height="14" viewBox="0 0 14 14"><path d="M0.5 1.5A1 1 0 0 1 1.5 0.5H6.3L13.5 7.7L7.7 13.5L0.5 6.3Z" fill="#404040" stroke="#404040" stroke-width="0.6" stroke-linejoin="round"/><circle cx="3.6" cy="3.6" r="1.15" fill="#fff"/></svg>
<svg class="a" style="left:839.5px;top:311.8px" width="14" height="11" viewBox="0 0 14 11"><path d="M0 1H8.5M0 4H8.5M0 7H5.5M10.5 4.5V10.5M7.5 7.5H13.5" stroke="#404040" stroke-width="1.35"/></svg>
<svg class="a" style="left:886px;top:311.75px" width="13.5" height="10.5" viewBox="0 0 13.5 10.5"><rect x="0" y="0" width="13.5" height="10.5" rx="1.2" fill="#404040"/><path d="M1 1.3L6.75 5.2L12.5 1.3" stroke="#fff" stroke-width="1.2" fill="none"/></svg>
<div class="a" style="left:783.5px;top:353.0px;width:33px;height:33px;border-radius:7px;border:1px solid #ececec;background:#fff"></div>
<div class="a" style="left:829.8px;top:353.0px;width:33px;height:33px;border-radius:7px;border:1px solid #ececec;background:#fff"></div>
<div class="a" style="left:876.0999999999999px;top:353.0px;width:33px;height:33px;border-radius:7px;border:1px solid #ececec;background:#fff"></div>
<svg class="a" style="left:793px;top:362.70000000000005px" width="14" height="14" viewBox="0 0 14 14"><path d="M0.5 1.5A1 1 0 0 1 1.5 0.5H6.3L13.5 7.7L7.7 13.5L0.5 6.3Z" fill="#404040" stroke="#404040" stroke-width="0.6" stroke-linejoin="round"/><circle cx="3.6" cy="3.6" r="1.15" fill="#fff"/></svg>
<svg class="a" style="left:839.5px;top:364.29999999999995px" width="14" height="11" viewBox="0 0 14 11"><path d="M0 1H8.5M0 4H8.5M0 7H5.5M10.5 4.5V10.5M7.5 7.5H13.5" stroke="#404040" stroke-width="1.35"/></svg>
<svg class="a" style="left:886px;top:364.25px" width="13.5" height="10.5" viewBox="0 0 13.5 10.5"><rect x="0" y="0" width="13.5" height="10.5" rx="1.2" fill="#404040"/><path d="M1 1.3L6.75 5.2L12.5 1.3" stroke="#fff" stroke-width="1.2" fill="none"/></svg>
<div class="a" style="left:783.5px;top:405.5px;width:33px;height:33px;border-radius:7px;border:1px solid #ececec;background:#fff"></div>
<div class="a" style="left:829.8px;top:405.5px;width:33px;height:33px;border-radius:7px;border:1px solid #ececec;background:#fff"></div>
<div class="a" style="left:876.0999999999999px;top:405.5px;width:33px;height:33px;border-radius:7px;border:1px solid #ececec;background:#fff"></div>
<svg class="a" style="left:793px;top:415.20000000000005px" width="14" height="14" viewBox="0 0 14 14"><path d="M0.5 1.5A1 1 0 0 1 1.5 0.5H6.3L13.5 7.7L7.7 13.5L0.5 6.3Z" fill="#404040" stroke="#404040" stroke-width="0.6" stroke-linejoin="round"/><circle cx="3.6" cy="3.6" r="1.15" fill="#fff"/></svg>
<svg class="a" style="left:839.5px;top:416.79999999999995px" width="14" height="11" viewBox="0 0 14 11"><path d="M0 1H8.5M0 4H8.5M0 7H5.5M10.5 4.5V10.5M7.5 7.5H13.5" stroke="#404040" stroke-width="1.35"/></svg>
<svg class="a" style="left:886px;top:416.75px" width="13.5" height="10.5" viewBox="0 0 13.5 10.5"><rect x="0" y="0" width="13.5" height="10.5" rx="1.2" fill="#404040"/><path d="M1 1.3L6.75 5.2L12.5 1.3" stroke="#fff" stroke-width="1.2" fill="none"/></svg>
<div class="a" style="left:783.5px;top:458.0px;width:33px;height:33px;border-radius:7px;border:1px solid #ececec;background:#fff"></div>
<div class="a" style="left:829.8px;top:458.0px;width:33px;height:33px;border-radius:7px;border:1px solid #ececec;background:#fff"></div>
<div class="a" style="left:876.0999999999999px;top:458.0px;width:33px;height:33px;border-radius:7px;border:1px solid #ececec;background:#fff"></div>
<svg class="a" style="left:793px;top:467.70000000000005px" width="14" height="14" viewBox="0 0 14 14"><path d="M0.5 1.5A1 1 0 0 1 1.5 0.5H6.3L13.5 7.7L7.7 13.5L0.5 6.3Z" fill="#404040" stroke="#404040" stroke-width="0.6" stroke-linejoin="round"/><circle cx="3.6" cy="3.6" r="1.15" fill="#fff"/></svg>
<svg class="a" style="left:839.5px;top:469.29999999999995px" width="14" height="11" viewBox="0 0 14 11"><path d="M0 1H8.5M0 4H8.5M0 7H5.5M10.5 4.5V10.5M7.5 7.5H13.5" stroke="#404040" stroke-width="1.35"/></svg>
<svg class="a" style="left:886px;top:469.25px" width="13.5" height="10.5" viewBox="0 0 13.5 10.5"><rect x="0" y="0" width="13.5" height="10.5" rx="1.2" fill="#404040"/><path d="M1 1.3L6.75 5.2L12.5 1.3" stroke="#fff" stroke-width="1.2" fill="none"/></svg>
<div class="a" style="left:783.5px;top:510.5px;width:33px;height:33px;border-radius:7px;border:1px solid #ececec;background:#fff"></div>
<div class="a" style="left:829.8px;top:510.5px;width:33px;height:33px;border-radius:7px;border:1px solid #ececec;background:#fff"></div>
<div class="a" style="left:876.0999999999999px;top:510.5px;width:33px;height:33px;border-radius:7px;border:1px solid #ececec;background:#fff"></div>
<svg class="a" style="left:793px;top:520.2px" width="14" height="14" viewBox="0 0 14 14"><path d="M0.5 1.5A1 1 0 0 1 1.5 0.5H6.3L13.5 7.7L7.7 13.5L0.5 6.3Z" fill="#404040" stroke="#404040" stroke-width="0.6" stroke-linejoin="round"/><circle cx="3.6" cy="3.6" r="1.15" fill="#fff"/></svg>
<svg class="a" style="left:839.5px;top:521.8px" width="14" height="11" viewBox="0 0 14 11"><path d="M0 1H8.5M0 4H8.5M0 7H5.5M10.5 4.5V10.5M7.5 7.5H13.5" stroke="#404040" stroke-width="1.35"/></svg>
<svg class="a" style="left:886px;top:521.75px" width="13.5" height="10.5" viewBox="0 0 13.5 10.5"><rect x="0" y="0" width="13.5" height="10.5" rx="1.2" fill="#404040"/><path d="M1 1.3L6.75 5.2L12.5 1.3" stroke="#fff" stroke-width="1.2" fill="none"/></svg>
<div class="a" style="left:783.5px;top:563.0px;width:33px;height:33px;border-radius:7px;border:1px solid #ececec;background:#fff"></div>
<div class="a" style="left:829.8px;top:563.0px;width:33px;height:33px;border-radius:7px;border:1px solid #ececec;background:#fff"></div>
<div class="a" style="left:876.0999999999999px;top:563.0px;width:33px;height:33px;border-radius:7px;border:1px solid #ececec;background:#fff"></div>
<svg class="a" style="left:793px;top:572.7px" width="14" height="14" viewBox="0 0 14 14"><path d="M0.5 1.5A1 1 0 0 1 1.5 0.5H6.3L13.5 7.7L7.7 13.5L0.5 6.3Z" fill="#404040" stroke="#404040" stroke-width="0.6" stroke-linejoin="round"/><circle cx="3.6" cy="3.6" r="1.15" fill="#fff"/></svg>
<svg class="a" style="left:839.5px;top:574.3px" width="14" height="11" viewBox="0 0 14 11"><path d="M0 1H8.5M0 4H8.5M0 7H5.5M10.5 4.5V10.5M7.5 7.5H13.5" stroke="#404040" stroke-width="1.35"/></svg>
<svg class="a" style="left:886px;top:574.25px" width="13.5" height="10.5" viewBox="0 0 13.5 10.5"><rect x="0" y="0" width="13.5" height="10.5" rx="1.2" fill="#404040"/><path d="M1 1.3L6.75 5.2L12.5 1.3" stroke="#fff" stroke-width="1.2" fill="none"/></svg>
<div class="a" style="left:933px;top:31px;width:13px;height:556px;background:#fff;border-left:1px solid #ececec"></div>
<div class="a" style="left:936.5px;top:33.5px;width:6.5px;height:140px;border-radius:3.5px;background:#c2c2c2"></div>
<div class="a" style="left:1px;top:587px;width:945px;height:14px;background:#fafafa;border-top:1px solid #e2e2e2"></div>
<div class="a" style="left:93px;top:587px;width:2px;height:14px;background:#dedede"></div>
<div class="a" style="left:772px;top:587px;width:2px;height:14px;background:#dddddd"></div>
<div class="a" style="left:98px;top:593px;width:190px;height:5.5px;border-radius:3px;background:#c6c6c6"></div>
<div class="a" style="left:0;top:599px;width:947px;height:2px;background:#d9d9d9"></div>
</div>
<!-- MAIN END -->

<!-- ===== OVERLAYS ===== -->
<!-- OV START -->
<!-- AS avatar -->
<div class="a" style="left:8px;top:747px;width:46px;height:46px;border-radius:50%;background:#a2a2a2;border:2px solid #dedede"></div>
<div class="a nw" style="left:9px;top:759px;width:46px;text-align:center;font-size:17.5px;line-height:21px;color:#f4f4f4">AS</div>
<!-- video bubble -->
<div class="a" style="left:6.5px;top:595px;width:198.5px;height:198.5px;border-radius:50%;overflow:hidden;background:#d6dada">
<svg width="199" height="199" viewBox="6.5 595 198.5 198.5">
<defs><filter id="vb"><feGaussianBlur stdDeviation="0.6"/></filter><linearGradient id="wall" x1="0" x2="1" y1="0" y2="0"><stop offset="0" stop-color="#cfd3d3"/><stop offset="0.25" stop-color="#d9dddd"/><stop offset="0.6" stop-color="#e6e9e9"/><stop offset="0.85" stop-color="#e2e5e5"/><stop offset="1" stop-color="#c9cdcd"/></linearGradient>
<linearGradient id="neck" x1="0" x2="0" y1="0" y2="1"><stop offset="0" stop-color="#b88e78"/><stop offset="0.5" stop-color="#d0a890"/><stop offset="1" stop-color="#d6b09a"/></linearGradient></defs>
<rect x="6" y="595" width="200" height="200" fill="url(#wall)"/>
<g filter="url(#vb)">
<rect x="41" y="612" width="4" height="150" fill="#bfc4c4"/>
<rect x="150" y="595" width="32" height="200" fill="#eceeee"/>
<rect x="183" y="640" width="24" height="150" fill="#b3b8b8"/>
<!-- shirt -->
<path d="M8 800 L14 760 Q22 750 40 746 Q56 740 64 734 Q96 784 129 734 Q150 742 168 747 Q180 752 190 762 L200 800Z" fill="#232325"/>
<!-- neck -->
<path d="M66 706 L64 736 Q96 786 129 736 L127 706Z" fill="url(#neck)"/>
<!-- ears/earbuds -->
<ellipse cx="55.5" cy="692" rx="3.5" ry="8" fill="#2a2424"/>
<ellipse cx="132.5" cy="692" rx="3.5" ry="8" fill="#2a2424"/>
<!-- face -->
<path d="M56.5 662 L56.5 706 Q62 724 78 732 Q92 738 106 732 Q124 722 130 706 L130 662 Q120 642 94 642 Q68 642 56.5 662Z" fill="#dfbfaa"/>
<!-- hair -->
<path d="M52.5 678 Q48 662 50 646 Q52 630 64 623 Q78 615 92 616 Q110 616 121 623 Q133 632 134.5 648 Q135 662 132.5 678 L128.6 666 Q125 656 119 649 L110 647 Q101 653 87 650 Q75 653 63 654 Q58 664 56.4 678Z" fill="#201c1b"/>
<path d="M66 630 Q82 622 100 624 M72 640 Q90 634 112 636 M60 648 Q64 638 70 634" stroke="#3a3432" stroke-width="1.3" fill="none"/>
<!-- brows/eyes -->
<path d="M66 670 Q75 666 85 669M103 669 Q113 666 122 670" stroke="#6a4f45" stroke-width="1.5" fill="none"/>
<ellipse cx="75" cy="682" rx="6" ry="2.2" fill="#5a4038"/>
<ellipse cx="109" cy="682" rx="6" ry="2.2" fill="#5a4038"/>
<!-- glasses -->
<path d="M56.5 671 L86 670 L89 676 L87 693 L80 696 L62 695 L57 688Z M101 670 L130 671 L130 688 L126 695 L106 696 L99 693 L98 676Z M89 675 Q93.5 672 98 675" stroke="#dcd0c0" stroke-width="1.4" fill="none"/>
<!-- nose/mouth -->
<path d="M91 690 Q89 700 86 703 Q92 707 100 703 Q98 699 96 690" stroke="#c89c86" stroke-width="1.3" fill="none"/>
<path d="M77 714 Q91 709 105 714 Q91 719 77 714Z" fill="#8a5450"/>
</g>
</svg>
</div>
<!-- loom control bar -->
<div class="a" style="left:220px;top:740px;width:270px;height:45px;border-radius:13px;background:#222327;box-shadow:0 0 0 3px rgba(255,255,255,0.28)"></div>
<div class="a" style="left:235.5px;top:747px;width:30px;height:30px;border-radius:50%;background:#141416"></div>
<div class="a" style="left:242.5px;top:754px;width:16px;height:16px;border-radius:2.5px;background:#58585c"></div>
<div class="a" style="left:277.5px;top:755px;width:5px;height:15px;border-radius:1.5px;background:#4e4e52"></div>
<div class="a" style="left:285.5px;top:755px;width:5px;height:15px;border-radius:1.5px;background:#4e4e52"></div>
<svg class="a" style="left:307px;top:756px" width="19" height="12" viewBox="0 0 19 12"><path d="M0.5 6L9 0.5V11.5ZM9 6L17.5 0.5V11.5Z" fill="#48484c" stroke="#48484c" stroke-linejoin="round" stroke-width="1"/></svg>
<div class="a nw" style="left:341.5px;top:754px;font-size:13.8px;line-height:17px;color:#9b9b9e">0:00</div>
<!-- notification -->
<div class="a" style="left:387px;top:750.5px;width:506px;height:41.5px;border-radius:3px;background:#f6f6f6;box-shadow:0 1px 4px rgba(0,0,0,0.22),0 0 0 0.5px rgba(0,0,0,0.08)"></div>
<div class="a" style="left:397px;top:765px;width:1.3px;height:13px;background:#cbcbcb"></div>
<div class="a" style="left:400.5px;top:765px;width:1.3px;height:13px;background:#cbcbcb"></div>
<div class="a nw" style="left:410.5px;top:764px;font-size:11.13px;line-height:14px;color:#2f2f2f">Loom – Screen Recorder &amp; Screen Capture is sharing your screen.</div>
<div class="a" style="left:752px;top:756px;width:99.5px;height:30.5px;border-radius:15px;background:#dedede"></div>
<div class="a nw" style="left:752px;top:764px;width:99.5px;text-align:center;font-size:12.8px;line-height:16px;color:#555">Stop sharing</div>
<div class="a nw" style="left:861px;top:764px;font-size:11.2px;line-height:14px;color:#2b60c0;text-decoration:underline">Hide</div>
<!-- chat widget -->
<div class="a" style="left:1219.5px;top:700px;width:43px;height:43px;border-radius:50%;background:#c6e13b;box-shadow:0 1px 4px rgba(0,0,0,0.12)"></div>
<svg class="a" style="left:1231px;top:711px" width="20" height="22" viewBox="0 0 20 22"><path d="M2.5 0.5H17.5A2 2 0 0 1 19.5 2.5V21.5L15 18.5H2.5A2 2 0 0 1 0.5 16.5V2.5A2 2 0 0 1 2.5 0.5Z" fill="#141414"/><path d="M4 12 Q10 16 16 12" stroke="#c6e13b" stroke-width="1.5" fill="none"/></svg>
<div class="a" style="left:1256px;top:700.5px;width:14px;height:14px;border-radius:50%;background:#d8262c;border:1px solid #fff"></div>
<div class="a nw b" style="left:1256px;top:701.5px;width:14px;text-align:center;font:bold 9px/12px 'Liberation Sans';color:#fff">1</div>
<!-- cursor -->
<svg class="a" style="left:761px;top:400px" width="17" height="19" viewBox="0 0 17 19"><path d="M5 1.5 Q6.5 0.5 7.5 2 L8.5 7 L9 5.5 Q10.5 5 11 6.5 L11.5 7 Q13 6.5 13.5 8 Q15 7.5 15.5 9 L15 14 Q14 17 12 17.5 L8 17.5 Q6 16.5 2 11.5 Q1 10 2.5 9.5 Q4 9.5 5.5 11 Z" fill="#fff" stroke="#222" stroke-width="1.3" stroke-linejoin="round"/><path d="M9.5 13V15.5M11 13V15.5M12.5 13V15.5" stroke="#555" stroke-width="0.8"/></svg>
<!-- OV END -->
</body></html>
